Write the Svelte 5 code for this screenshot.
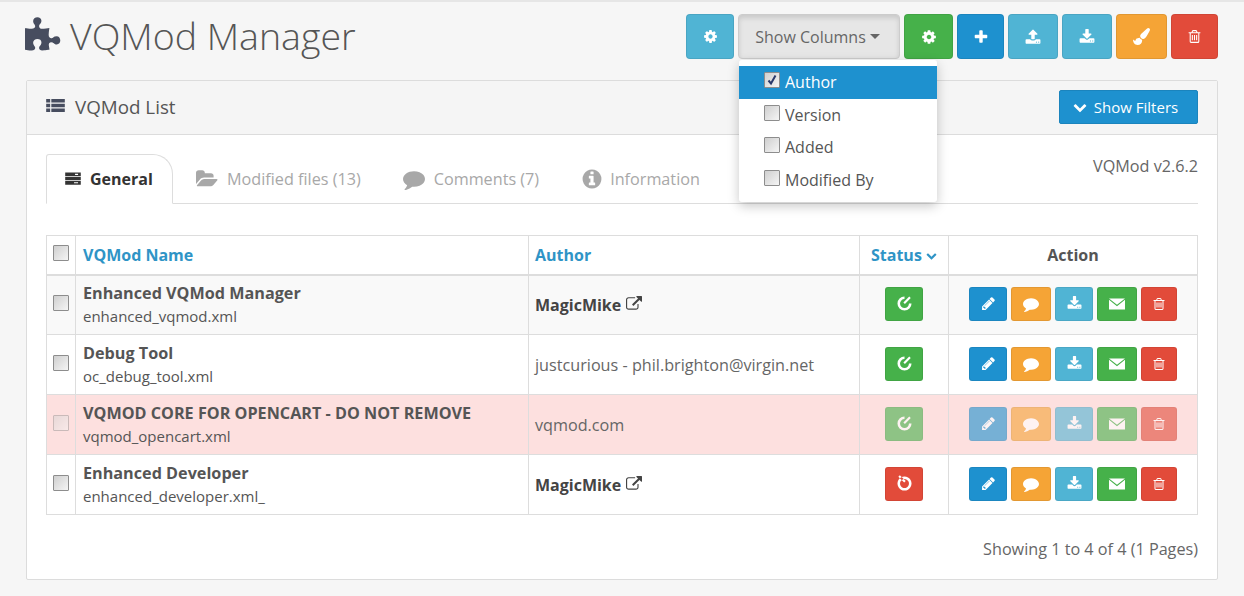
<script>
  // FontAwesome-like glyphs, 1792 box unless the viewBox says otherwise
  const ICONS = {
    cog: 'M1152 896q0-106-75-181t-181-75-181 75-75 181 75 181 181 75 181-75 75-181zm512-109v222q0 12-8 23t-20 13l-185 28q-19 54-39 91 35 50 107 138 10 12 10 25t-9 23q-27 37-99 108t-94 71q-12 0-26-9l-138-108q-44 23-91 38-16 136-29 186-7 28-36 28h-222q-14 0-24.5-8.5t-11.5-21.5l-28-184q-49-16-90-37l-141 107q-10 9-25 9-14 0-25-11-126-114-165-168-7-10-7-23 0-12 8-23 15-21 51-66.5t54-70.5q-27-50-41-99l-183-27q-13-2-21-12.5t-8-23.5v-222q0-12 8-23t19-13l186-28q14-46 39-92-40-57-107-138-10-12-10-24 0-10 9-23 26-36 98.5-107.5t94.5-71.5q13 0 26 10l138 107q44-23 91-38 16-136 29-186 7-28 36-28h222q14 0 24.5 8.5t11.5 21.5l28 184q49 16 90 37l142-107q9-9 24-9 13 0 25 10 129 119 165 170 7 8 7 22 0 12-8 23-15 21-51 66.5t-54 70.5q26 50 41 98l183 28q13 2 21 12.5t8 23.5z',
    plus: 'M1600 736v192q0 40-28 68t-68 28h-416v416q0 40-28 68t-68 28h-192q-40 0-68-28t-28-68v-416h-416q-40 0-68-28t-28-68v-192q0-40 28-68t68-28h416v-416q0-40 28-68t68-28h192q40 0 68 28t28 68v416h416q40 0 68 28t28 68z',
    upload: 'M1344 1472q0-26-19-45t-45-19-45 19-19 45 19 45 45 19 45-19 19-45zm256 0q0-26-19-45t-45-19-45 19-19 45 19 45 45 19 45-19 19-45zm128-224v320q0 40-28 68t-68 28h-1472q-40 0-68-28t-28-68v-320q0-40 28-68t68-28h427q21 56 70.5 92t110.5 36h256q61 0 110.5-36t70.5-92h427q40 0 68 28t28 68zm-325-648q-17 40-59 40h-256v448q0 26-19 45t-45 19h-256q-26 0-45-19t-19-45v-448h-256q-42 0-59-40-17-39 14-69l448-448q18-19 45-19t45 19l448 448q31 30 14 69z',
    download: 'M1344 1344q0-26-19-45t-45-19-45 19-19 45 19 45 45 19 45-19 19-45zm256 0q0-26-19-45t-45-19-45 19-19 45 19 45 45 19 45-19 19-45zm128-224v320q0 40-28 68t-68 28h-1472q-40 0-68-28t-28-68v-320q0-40 28-68t68-28h465l135 136q58 56 136 56t136-56l136-136h464q40 0 68 28t28 68zm-325-569q17 41-14 70l-448 448q-18 19-45 19t-45-19l-448-448q-31-29-14-70 17-39 59-39h256v-448q0-26 19-45t45-19h256q26 0 45 19t19 45v448h256q42 0 59 39z',
    brush: 'M1615 0q70 0 122.5 46.5t52.5 116.5q0 63-45 151-332 629-465 752-97 91-218 91-126 0-216.5-92.5t-90.5-219.5q0-128 92-212l638-579q59-54 130-54zm-909 1034q39 76 106.5 130t150.5 76l1 71q4 213-129.5 347t-348.5 134q-123 0-218-46.5t-152.5-127.5-86.5-183-29-220q7 5 41 30t62 44.5 59 36.5 46 17q41 0 55-37 25-66 57.5-112.5t69.5-76 88-47.5 103-25.5 125-10.5z',
    trash: 'M704 736v576q0 14-9 23t-23 9h-64q-14 0-23-9t-9-23v-576q0-14 9-23t23-9h64q14 0 23 9t9 23zm256 0v576q0 14-9 23t-23 9h-64q-14 0-23-9t-9-23v-576q0-14 9-23t23-9h64q14 0 23 9t9 23zm256 0v576q0 14-9 23t-23 9h-64q-14 0-23-9t-9-23v-576q0-14 9-23t23-9h64q14 0 23 9t9 23zm128 724v-948h-896v948q0 22 7 40.5t14.5 27 10.5 8.5h832q3 0 10.5-8.5t14.5-27 7-40.5zm-672-1076h448l-48-117q-7-9-17-11h-317q-10 2-17 11zm928 32v64q0 14-9 23t-23 9h-96v948q0 83-47 143.5t-113 60.5h-832q-66 0-113-58.5t-47-141.5v-952h-96q-14 0-23-9t-9-23v-64q0-14 9-23t23-9h309l70-167q15-37 54-63t79-26h320q40 0 79 26t54 63l70 167h309q14 0 23 9t9 23z',
    chevron: 'M1683 808l-742 741q-19 19-45 19t-45-19l-742-741q-19-19-19-45.5t19-45.5l166-165q19-19 45-19t45 19l531 531 531-531q19-19 45-19t45 19l166 165q19 19 19 45.5t-19 45.5z',
    pencil: 'M491 1536l91-91-235-235-91 91v107h128v128h107zm523-928q0-22-22-22-10 0-17 7l-542 542q-7 7-7 17 0 22 22 22 10 0 17-7l542-542q7-7 7-17zm-54-192l416 416-832 832h-416v-416zm683 96q0 53-37 90l-166 166-416-416 166-165q36-38 90-38 53 0 91 38l235 234q37 39 37 91z',
    comment: 'M1792 896q0 174-120 321.5t-326 233-450 85.5q-70 0-145-8-198 175-460 242-49 14-114 22-17 2-30.5-9t-17.5-29v-1q-3-4-.5-12t2-10 4.5-9.5l6-9 7-8.5 8-9q7-8 31-34.5t34.5-38 31-39.5 32.5-51 27-59 26-76q-157-89-247.5-220t-90.5-281q0-130 71-248.5t191-204.5 286-136.5 348-50.5q244 0 450 85.5t326 233 120 321.5z',
    envelope: 'M100 340h1592L896 980zM100 480l796 640 796-640v960H100z',
    puzzle: 'M1664 1108q0 81-44.5 135t-123.5 54q-41 0-77.5-17.5t-59-38-56.5-38-71-17.5q-110 0-110 124 0 39 16 115t15 115v5q-22 0-33 1-34 3-97.5 11.5t-115.5 13.5-98 5q-61 0-103-26.5t-42-83.5q0-37 17.5-71t38-56.5 38-59 17.5-77.5q0-79-54-123.5t-135-44.5q-84 0-143 45.5t-59 127.5q0 43 15 83t33.5 64.5 33.5 53 15 50.5q0 45-46 89-37 35-117 35-95 0-245-24-9-2-27.5-4t-27.5-4l-13-2q-1 0-3-1-2 0-2-1v-1024q2 1 17.5 3.5t34 5 21.5 3.5q150 24 245 24 80 0 117-35 46-44 46-89 0-22-15-50.5t-33.5-53-33.5-64.5-15-83q0-82 59-127.5t144-45.5q80 0 134 44.5t54 123.5q0 41-17.5 77.5t-38 59-38 56.5-17.5 71q0 57 42 83.5t103 26.5q64 0 180-15t163-17v2q-1 2-3.5 17.5t-5 34-3.5 21.5q-24 150-24 245 0 80 35 117 44 46 89 46 22 0 50.5-15t53-33.5 64.5-33.5 83-15q82 0 127.5 59t45.5 143z',
    external: 'M1408 928v320q0 119-84.5 203.5t-203.5 84.5h-832q-119 0-203.5-84.5t-84.5-203.5v-832q0-119 84.5-203.5t203.5-84.5h704q14 0 23 9t9 23v64q0 14-9 23t-23 9h-704q-66 0-113 47t-47 113v832q0 66 47 113t113 47h832q66 0 113-47t47-113v-320q0-14 9-23t23-9h64q14 0 23 9t9 23zm384-864v512q0 26-19 45t-45 19-45-19l-176-176-652 652q-10 10-23 10t-23-10l-114-114q-10-10-10-23t10-23l652-652-176-176q-19-19-19-45t19-45 45-19h512q26 0 45 19t19 45z',
    folder: 'M1879 952q0 31-31 66l-336 396q-43 51-120.5 86.5t-143.5 35.5h-1088q-34 0-60.5-13t-26.5-43q0-31 31-66l336-396q43-51 120.5-86.5t143.5-35.5h1088q34 0 60.5 13t26.5 43zm-343-344v160h-832q-94 0-197 47.5t-164 119.5l-337 396-5 6q0-4-.5-12.5t-.5-12.5v-960q0-92 66-158t158-66h320q92 0 158 66t66 158v32h544q92 0 158 66t66 158z',
    info: 'M1152 1376v-160q0-14-9-23t-23-9h-96v-512q0-14-9-23t-23-9h-320q-14 0-23 9t-9 23v160q0 14 9 23t23 9h96v320h-96q-14 0-23 9t-9 23v160q0 14 9 23t23 9h448q14 0 23-9t9-23zm-128-896v-160q0-14-9-23t-23-9h-192q-14 0-23 9t-9 23v160q0 14 9 23t23 9h192q14 0 23-9t9-23zm640 416q0 209-103 385.5t-279.5 279.5-385.5 103-385.5-103-279.5-279.5-103-385.5 103-385.5 279.5-279.5 385.5-103 385.5 103 279.5 279.5 103 385.5z',
    thlist: 'M100 260h340v300H100zM540 260h1150v300H540zM100 660h340v300H100zM540 660h1150v300H540zM100 1060h340v300H100zM540 1060h1150v300H540z',
    tasks: 'M120 240h1550v380H120zM1100 370h300v120h-300zM120 700h1550v300H120zM120 1080h1550v380H120zM1000 1210h400v120h-400z',
    power: 'M896 300a600 600 0 1 0 600 600h-220a380 380 0 1 1-380-380zM800 800L1300 300l130 130-500 500z',
    powerOff: 'M896 300a600 600 0 1 0 .1 0zM896 520a380 380 0 1 1-.1 0zM500 190l500 500-130 130-500-500z',
  };

  const TOP_BUTTONS = [
    { cls: 'green', icon: 'cog', w: 49, size: 16 },
    { cls: 'blue', icon: 'plus', w: 47, size: 16 },
    { cls: 'cyan', icon: 'upload', w: 50, size: 16 },
    { cls: 'cyan', icon: 'download', w: 50, size: 16 },
    { cls: 'orange', icon: 'brush', w: 51, size: 17 },
    { cls: 'red', icon: 'trash', w: 47, size: 15 },
  ];

  const COLUMNS = [
    { label: 'Author', checked: true },
    { label: 'Version', checked: false },
    { label: 'Added', checked: false },
    { label: 'Modified By', checked: false },
  ];

  const TABS = [
    { label: 'Modified files (13)', icon: 'folder' },
    { label: 'Comments (7)', icon: 'comment' },
    { label: 'Information', icon: 'info' },
  ];

  const ROWS = [
    { name: 'Enhanced VQMod Manager', file: 'enhanced_vqmod.xml', author: 'MagicMike', link: true, on: true, tone: 'hover' },
    { name: 'Debug Tool', file: 'oc_debug_tool.xml', author: 'justcurious - phil.brighton@virgin.net', on: true },
    { name: 'VQMOD CORE FOR OPENCART - DO NOT REMOVE', file: 'vqmod_opencart.xml', author: 'vqmod.com', on: true, tone: 'core' },
    { name: 'Enhanced Developer', file: 'enhanced_developer.xml_', author: 'MagicMike', link: true, on: false },
  ];

  const ACTIONS = [
    { cls: 'blue', icon: 'pencil', w: 38, size: 15 },
    { cls: 'orange', icon: 'comment', w: 40, size: 16 },
    { cls: 'cyan', icon: 'download', w: 38, size: 15 },
    { cls: 'green', icon: 'envelope', w: 40, size: 18 },
    { cls: 'red', icon: 'trash', w: 36, size: 14 },
  ];
</script>

{#snippet icon(name, size)}
  <svg class="ico" width={size} height={size} viewBox={name === 'folder' ? '0 0 1920 1792' : '0 0 1792 1792'} aria-hidden="true">
    <path d={ICONS[name]} fill="currentColor" fill-rule="evenodd" />
  </svg>
{/snippet}

{#snippet box(checked, faded)}
  <span class="box" class:faded>
    <input type="checkbox" {checked} />
    {#if checked}
      <svg class="tick" width="12" height="12" viewBox="0 0 12 12" aria-hidden="true"><path d="M2.5 6.5 5 9.5 9.5 1.5" fill="none" stroke="#2b3a6b" stroke-width="2" /></svg>
    {/if}
  </span>
{/snippet}

<div class="page">
  <header class="page-head">
    <h1>{@render icon('puzzle', 38)}<span>VQMod Manager</span></h1>
    <div class="toolbar">
      <button class="btn cyan first">{@render icon('cog', 15)}</button>
      <div class="columns">
        <button class="btn open">Show Columns <i class="caret"></i></button>
        <ul class="menu">
          {#each COLUMNS as col}
            <li class:active={col.checked}>{@render box(col.checked, false)}{col.label}</li>
          {/each}
        </ul>
      </div>
      {#each TOP_BUTTONS as b}
        <button class="btn {b.cls}" style="width:{b.w}px">{@render icon(b.icon, b.size)}</button>
      {/each}
    </div>
  </header>

  <section class="panel">
    <div class="panel-head">
      <h3>{@render icon('thlist', 21)}<span>VQMod List</span></h3>
      <button class="filters">{@render icon('chevron', 14)}<span>Show Filters</span></button>
    </div>
    <div class="panel-body">
      <div class="tabs-row">
        <ul class="tabs">
          <li class="tab current">{@render icon('tasks', 18)}General</li>
          {#each TABS as t}
            <li class="tab">{@render icon(t.icon, 22)}{t.label}</li>
          {/each}
        </ul>
        <div class="version">VQMod v2.6.2</div>
      </div>

      <table>
        <colgroup>
          <col style="width:29px" /><col style="width:453px" /><col style="width:331px" /><col style="width:89px" /><col />
        </colgroup>
        <thead>
          <tr>
            <th class="c">{@render box(false, false)}</th>
            <th class="link">VQMod Name</th>
            <th class="link">Author</th>
            <th class="link c">Status {@render icon('chevron', 11)}</th>
            <th class="c">Action</th>
          </tr>
        </thead>
        <tbody>
          {#each ROWS as row}
            <tr class={row.tone}>
              <td class="c">{@render box(false, row.tone === 'core')}</td>
              <td><div class="name">{row.name}</div><div class="file">{row.file}</div></td>
              <td>
                {#if row.link}
                  <span class="author-link">{row.author} {@render icon('external', 16)}</span>
                {:else}
                  {row.author}
                {/if}
              </td>
              <td class="c">
                <button class="btn-sm {row.on ? 'green' : 'red'}" style="width:38px">{@render icon(row.on ? 'power' : 'powerOff', 21)}</button>
              </td>
              <td class="c">
                <div class="actions">
                  {#each ACTIONS as a}
                    <button class="btn-sm {a.cls}" style="width:{a.w}px">{@render icon(a.icon, a.size)}</button>
                  {/each}
                </div>
              </td>
            </tr>
          {/each}
        </tbody>
      </table>

      <div class="pages">Showing 1 to 4 of 4 (1 Pages)</div>
    </div>
  </section>
</div>

<style>
  :global(body) {
    margin: 0;
    background: #f6f6f6;
    font-family: 'Open Sans', sans-serif;
    font-size: 16px;
    color: #666;
  }

  .page {
    height: 596px;
    box-sizing: border-box;
    padding: 0 26px 0;
    border-top: 2px solid #e6e6e6;
    overflow: hidden;
  }

  .ico { display: inline-block; flex: none; }

  /* ── Header ───────────────────────────────────────────── */
  .page-head {
    display: flex;
    justify-content: space-between;
    height: 78px;
  }
  h1 {
    margin: 0 0 0 -1px;
    display: flex;
    align-items: center;
    gap: 7px;
    height: 68px;
    font-size: 37.5px;
    font-weight: 300;
    color: #555;
    line-height: 1;
  }
  h1 .ico { color: #474d5f; }

  .toolbar {
    display: flex;
    gap: 4px;
    padding-top: 12px;
  }
  button { font-family: inherit; cursor: pointer; }
  .btn {
    height: 45px;
    box-sizing: border-box;
    padding: 0;
    display: flex;
    align-items: center;
    justify-content: center;
    border: 1px solid rgba(0,0,0,0.08);
    border-radius: 4px;
    color: #fff;
  }
  .btn.first { width: 48px; }
  .btn.open {
    width: 162px;
    gap: 4px;
    padding-right: 3px;
    font-size: 16px;
    color: #666;
    background: #e6e6e6;
    border-color: #ccc;
    box-shadow: inset 0 3px 5px rgba(0,0,0,0.125);
  }
  .caret {
    display: inline-block;
    border-top: 5px solid #666;
    border-left: 5px solid transparent;
    border-right: 5px solid transparent;
  }
  .blue { background: #1e91cf; }
  .green { background: #46b14a; }
  .cyan { background: #50b4d4; }
  .orange { background: #f5a436; }
  .red { background: #e24b3a; }

  .columns { position: relative; }
  .menu {
    position: absolute;
    top: 46px;
    left: 1px;
    z-index: 5;
    width: 198px;
    height: 142px;
    box-sizing: border-box;
    margin: 0;
    padding: 6px 0 0;
    list-style: none;
    background: #fff;
    border-radius: 3px;
    box-shadow: 0 4px 12px rgba(0,0,0,0.22);
    color: #555;
  }
  .menu li {
    display: flex;
    align-items: center;
    gap: 5px;
    height: 32.5px;
    padding-left: 25px;
    font-size: 16px;
  }
  .menu li.active { background: #1e91cf; color: #fff; }

  /* ── Checkbox ─────────────────────────────────────────── */
  .box {
    position: relative;
    display: inline-flex;
    width: 16px;
    height: 16px;
    vertical-align: middle;
    top: -2px;
  }
  th .box { top: -3px; }
  .box input {
    appearance: none;
    margin: 0;
    width: 16px;
    height: 16px;
    box-sizing: border-box;
    border: 1px solid #8d8d8d;
    border-radius: 1px;
    background: linear-gradient(135deg, #cfcfcf, #f5f5f5);
  }
  .box.faded { opacity: 0.45; }
  .tick { position: absolute; left: 2px; top: 2px; }

  /* ── Panel ────────────────────────────────────────────── */
  .panel {
    height: 500px;
    box-sizing: border-box;
    background: #fff;
    border: 1px solid #dcdcdc;
    border-radius: 2px;
  }
  .panel-head {
    display: flex;
    align-items: center;
    justify-content: space-between;
    height: 54px;
    box-sizing: border-box;
    padding: 0 19px 2px 18px;
    background: #f5f5f5;
    border-bottom: 1px solid #dcdcdc;
  }
  h3 {
    margin: 0;
    display: flex;
    align-items: center;
    gap: 9px;
    font-size: 18.8px;
    font-weight: 400;
    color: #555;
  }
  h3 .ico { color: #474d5f; }
  .filters {
    display: flex;
    align-items: center;
    justify-content: center;
    gap: 7px;
    width: 139px;
    height: 34px;
    padding: 0 6px 0 0;
    border: 1px solid #1b84bd;
    border-radius: 2px;
    background: #1e91cf;
    color: #fff;
    font-size: 15px;
  }
  .panel-body { padding: 19px 19px 0; }

  /* ── Tabs ─────────────────────────────────────────────── */
  .tabs-row {
    position: relative;
    height: 50px;
    box-sizing: border-box;
    border-bottom: 1px solid #ddd;
    margin-bottom: 31px;
  }
  .tabs {
    display: flex;
    margin: 0;
    padding: 0;
    list-style: none;
    height: 50px;
  }
  .tab {
    display: flex;
    align-items: center;
    gap: 9px;
    padding: 0 21px;
    font-size: 16.2px;
    color: #a8a8a8;
  }
  .tab:last-child { gap: 7px; }
  .tab.current {
    box-sizing: border-box;
    width: 127px;
    padding: 0 0 0 17px;
    gap: 8px;
    margin-right: 2px;
    font-size: 16px;
    color: #333;
    font-weight: 700;
    background: #fff;
    border: 1px solid #ddd;
    border-bottom-color: #fff;
    border-radius: 3px 20px 0 0;
  }
  .version {
    position: absolute;
    right: 0;
    top: 1px;
    font-size: 16.2px;
    color: #666;
  }

  /* ── Table ────────────────────────────────────────────── */
  table {
    width: 100%;
    table-layout: fixed;
    border-collapse: collapse;
    border: 1px solid #ddd;
  }
  th, td {
    border: 1px solid #ddd;
    padding: 0 7px;
    text-align: left;
    font-size: 16.2px;
  }
  th:nth-child(3), td:nth-child(3) { padding-left: 6px; }
  thead tr { height: 39px; }
  th { border-bottom-width: 2px; font-size: 16px; font-weight: 700; color: #555; }
  th.link { color: #2f94c6; }
  th.link .ico { vertical-align: 0; }
  tbody tr { height: 60px; }
  .c { text-align: center; padding: 0; }
  td.c { padding-bottom: 2px; }
  .hover { background: #f9f9f9; }
  .core { background: #fde0df; }
  .name { font-weight: 700; color: #555; line-height: 24px; }
  .file { font-size: 15px; color: #555; line-height: 23px; }
  .author-link { font-weight: 700; font-size: 16px; color: #444; }
  .author-link .ico { vertical-align: -1px; margin-left: 1px; }

  .btn-sm {
    height: 34px;
    padding: 0;
    box-sizing: border-box;
    display: inline-flex;
    align-items: center;
    justify-content: center;
    vertical-align: middle;
    border: 1px solid rgba(0,0,0,0.07);
    border-radius: 3px;
    color: #fff;
  }
  .actions { display: flex; justify-content: center; gap: 4px; }
  .core .btn-sm { opacity: 0.6; }

  .pages {
    margin-top: 23px;
    text-align: right;
    font-size: 16.2px;
    color: #666;
  }
</style>
